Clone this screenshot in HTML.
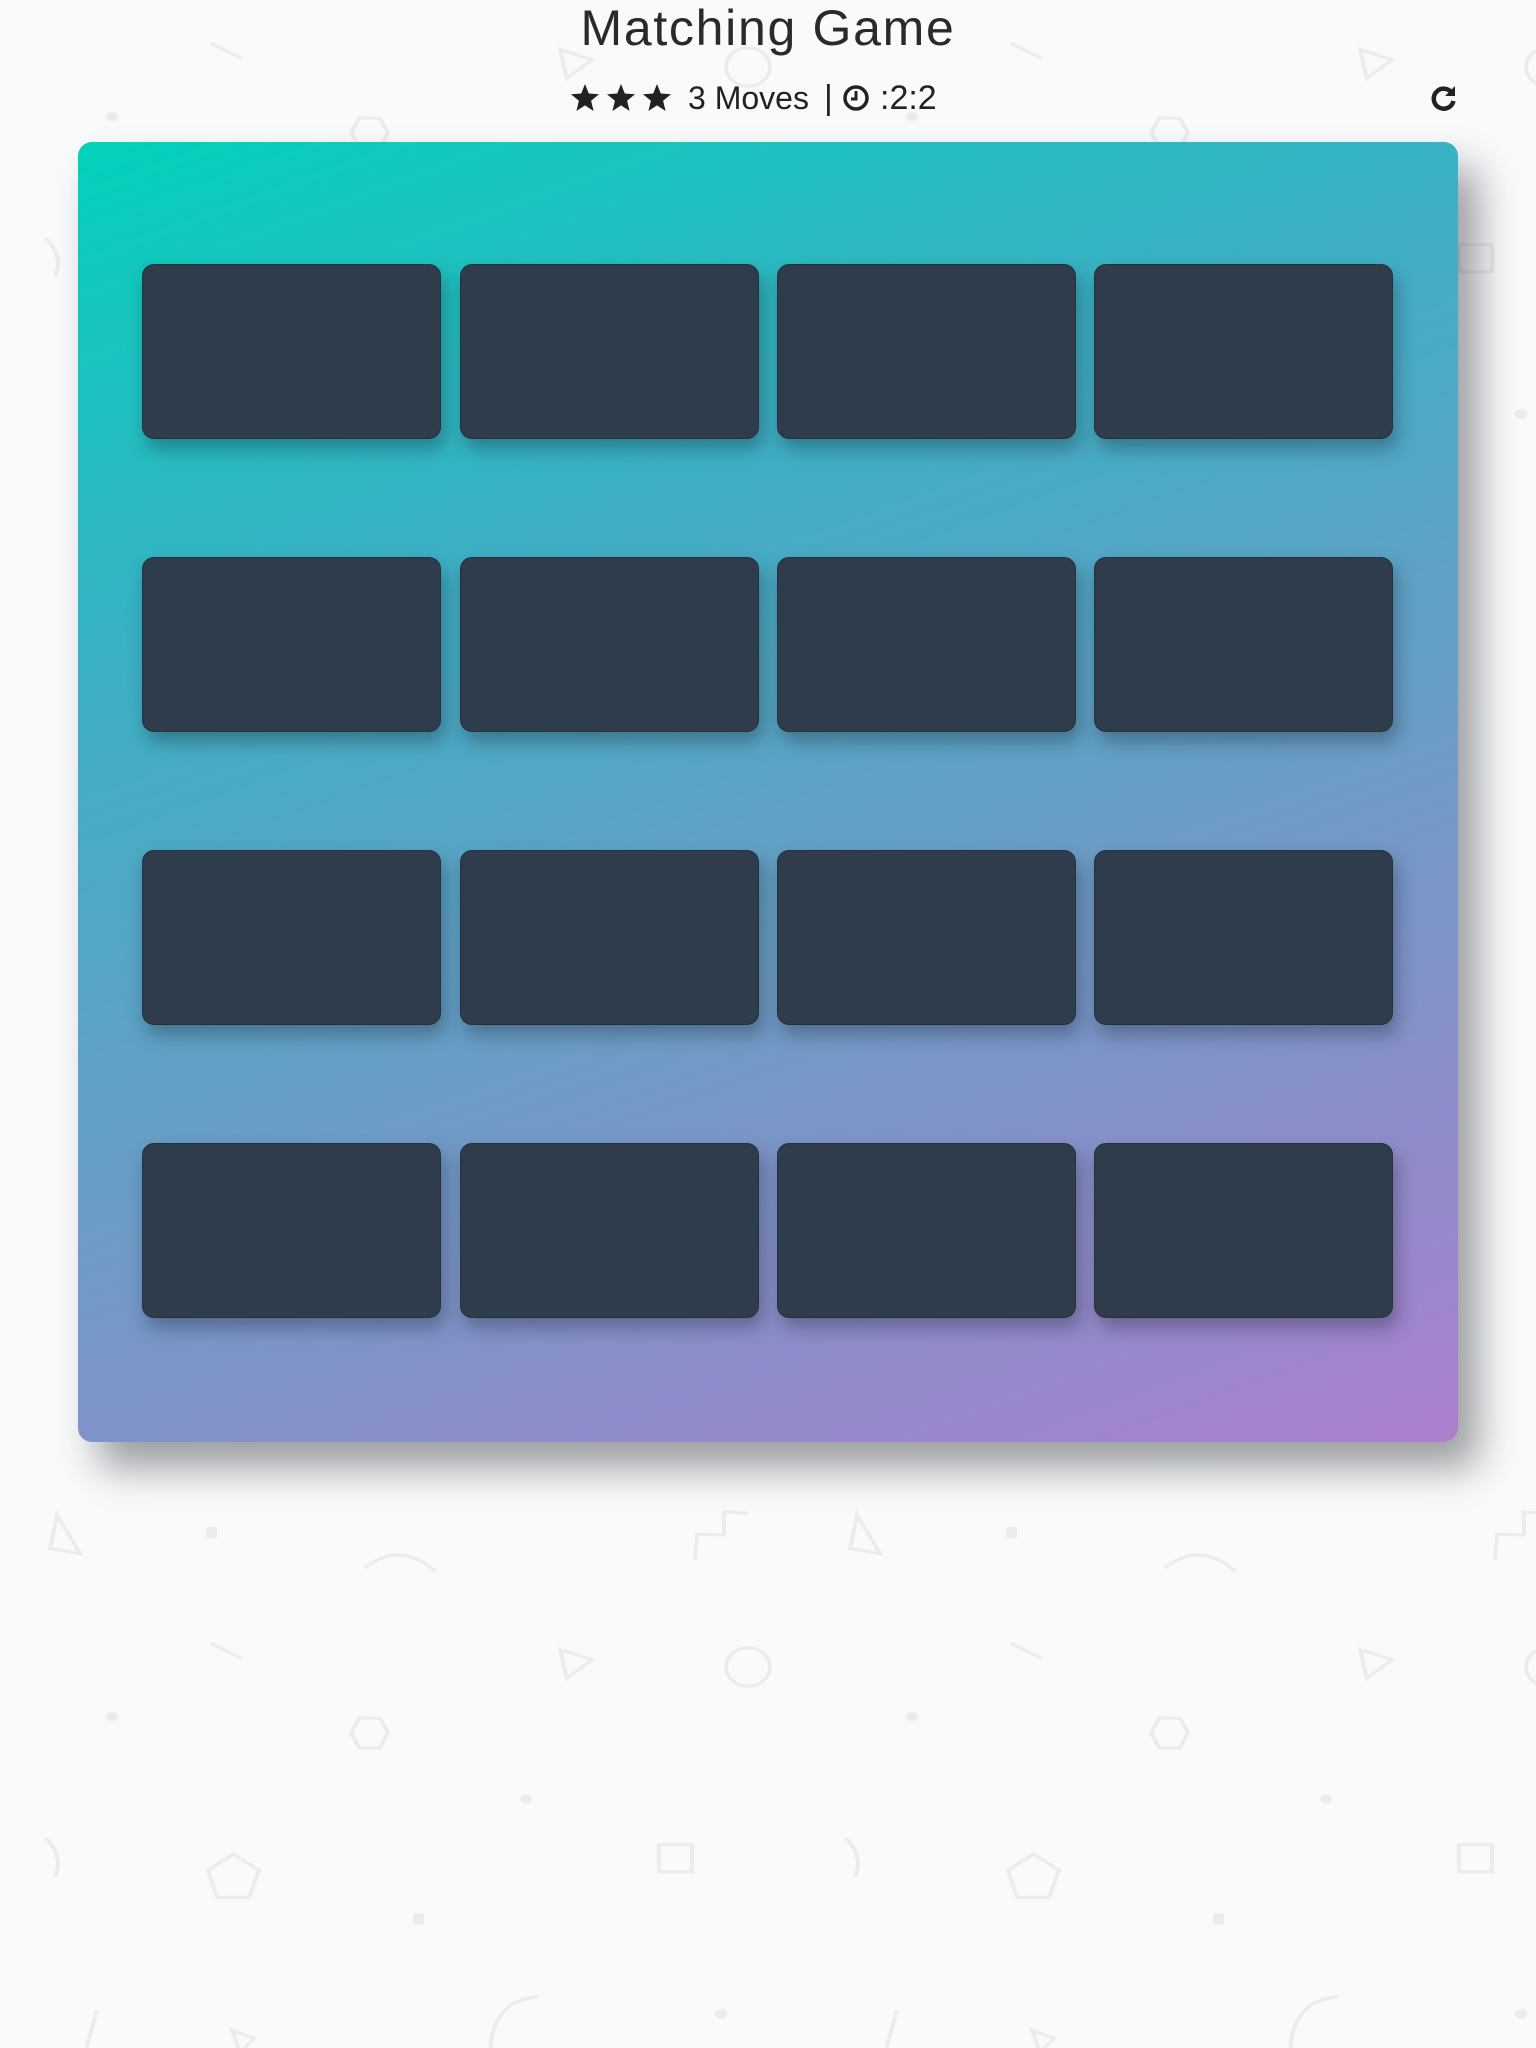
<!DOCTYPE html>
<html><head><meta charset="utf-8"><style>
html,body{margin:0;padding:0;width:1536px;height:2048px;overflow:hidden;}
body{background:#f9fafb;position:relative;font-family:"Liberation Sans",sans-serif;color:#2e3c4b;}
#bg{position:absolute;left:0;top:0;overflow:hidden;}
h1{position:absolute;left:0;width:1536px;top:0;margin:0;text-align:center;font-weight:300;font-size:50px;line-height:56px;color:#2a2a2a;letter-spacing:1.7px;}
.stats{position:absolute;top:78px;left:570px;height:40px;font-size:31px;line-height:40px;color:#222;display:flex;align-items:center;white-space:nowrap;}
.stats span{display:inline-block;}
.deck{position:absolute;left:78px;top:142px;width:1380px;height:1300px;border-radius:14px;background:linear-gradient(160deg,#02d1bb 0%,#3cb0c4 30%,#6f9bc6 62%,#ab7fcd 100%);box-shadow:20px 26px 40px rgba(40,45,50,0.45);}
.card{position:absolute;width:297px;height:173px;background:#2e3c4b;border:1px solid #26313d;border-radius:12px;box-shadow:4px 10px 18px rgba(20,30,40,0.35);}
</style></head><body>
<svg id="bg" width="1536" height="2048">
<defs>
<g id="t" fill="none" stroke="#ececee" stroke-width="4">
<path d="M57 1538 L50 1580 L80 1586 Z"/>
<rect x="206" y="1553" width="11" height="14" fill="#ececee" stroke="none"/>
<path d="M365 1604 Q400 1570 435 1608"/>
<path d="M695 1594 L697 1562 L724 1563 L724 1534 L748 1536"/>
<path d="M211 1698 L242 1718"/>
<path d="M560 1706 L592 1719 L567 1742 Z"/>
<ellipse cx="748" cy="1728" rx="22" ry="24"/>
<circle cx="112" cy="1790" r="6" fill="#ececee" stroke="none"/>
<path d="M359 1792 L380 1792 L388 1810 L380 1829 L359 1829 L351 1810 Z"/>
<circle cx="526" cy="1893" r="6" fill="#ececee" stroke="none"/>
<path d="M46 1942 Q64 1965 55 1990"/>
<path d="M233 1962 L259 1982 L249 2016 L217 2016 L208 1982 Z"/>
<rect x="659" y="1950" width="33" height="34"/>
<rect x="413" y="2036" width="11" height="14" fill="#ececee" stroke="none"/>
<path d="M97 2157 L84 2215"/>
<path d="M490 2215 Q490 2145 538 2140"/>
<path d="M232 2182 L254 2192 L240 2210 Z"/>
<circle cx="721" cy="2162" r="6" fill="#ececee" stroke="none"/>
</g>
<g id="t2" transform="translate(0,1535) scale(1,0.8) translate(0,-1563)"><use href="#t"/></g>
</defs>
<use href="#t2"/>
<use href="#t2" transform="translate(800,0)"/>
<use href="#t2" transform="translate(0,-1600)"/>
<use href="#t2" transform="translate(800,-1600)"/>
</svg>
<h1>Matching Game</h1>
<div class="stats">
<svg width="104" height="30" viewBox="0 0 104 30"><g fill="#222"><path id="s" d="M15 1 L18.8 10.5 L29 11.2 L21.1 17.8 L23.6 28 L15 22.4 L6.4 28 L8.9 17.8 L1 11.2 L11.2 10.5 Z"/><use href="#s" x="36"/><use href="#s" x="72"/></g></svg>
<span style="margin-left:14px;width:136px;font-size:32px">3 Moves</span>
<span style="margin-left:0px;width:6px;font-size:34px">|</span>
<svg style="margin-left:12px" width="28" height="28" viewBox="0 0 28 28"><circle cx="14" cy="14" r="11" fill="none" stroke="#222" stroke-width="3.5"/><path d="M14 7 V15 H9" fill="none" stroke="#222" stroke-width="3"/></svg>
<span style="margin-left:10px;font-size:34px">:2:2</span>
</div>
<svg style="position:absolute;left:1430px;top:84px" width="28" height="28" viewBox="0 0 28 28"><path d="M22 9 A10 10 0 1 0 23.5 17" fill="none" stroke="#222" stroke-width="4.5"/><path d="M25 2 L25 12 L15 12 Z" fill="#222"/></svg>
<div class="deck"></div>
<div class="card" style="left:142px;top:264px"></div>
<div class="card" style="left:460px;top:264px"></div>
<div class="card" style="left:777px;top:264px"></div>
<div class="card" style="left:1094px;top:264px"></div>
<div class="card" style="left:142px;top:557px"></div>
<div class="card" style="left:460px;top:557px"></div>
<div class="card" style="left:777px;top:557px"></div>
<div class="card" style="left:1094px;top:557px"></div>
<div class="card" style="left:142px;top:850px"></div>
<div class="card" style="left:460px;top:850px"></div>
<div class="card" style="left:777px;top:850px"></div>
<div class="card" style="left:1094px;top:850px"></div>
<div class="card" style="left:142px;top:1143px"></div>
<div class="card" style="left:460px;top:1143px"></div>
<div class="card" style="left:777px;top:1143px"></div>
<div class="card" style="left:1094px;top:1143px"></div>
</body></html>
